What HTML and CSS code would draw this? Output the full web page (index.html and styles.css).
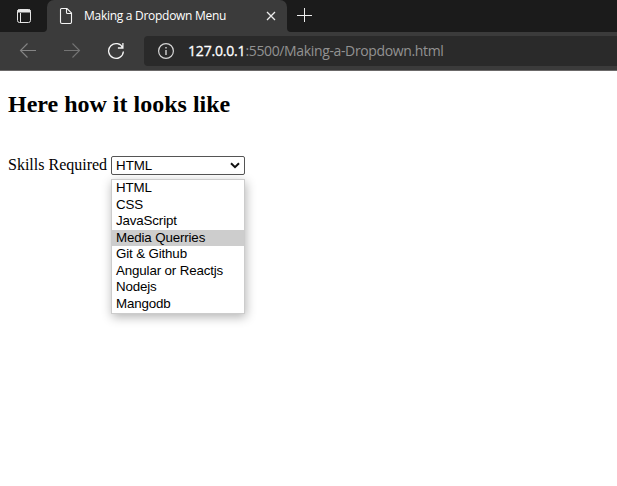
FILE: index.html
```html
<!DOCTYPE html>
<html lang="en">
<head>
<meta charset="utf-8">
<title>Making a Dropdown Menu</title>
<link rel="stylesheet" href="styles.css">
</head>
<body>
<header class="browser">
  <div class="tabs">
    <div class="tab-actions">
      <svg width="16" height="16" viewBox="0 0 16 16" fill="none" stroke="#e6e6e6"><rect x="1.5" y="1.5" width="13" height="13" rx="2"/><path d="M2 2h12v2H2z" fill="#e6e6e6"/><path d="M4.500 5v9"/></svg>
    </div>
    <div class="tab">
      <svg class="page-icon" width="14" height="18" viewBox="0 0 14 18" fill="none" stroke="#f4f4f4" stroke-width="1.1"><path d="M2.5 1.5H8l4.5 4.5v9a1.5 1.5 0 0 1-1.5 1.5H3A1.5 1.5 0 0 1 1.500 15V2.500a1 1 0 0 1 1-1ZM7.500 1.500v4a1 1 0 0 0 1 1h4"/></svg>
      <span class="title">Making a Dropdown Menu</span>
      <svg class="close" width="10" height="10" viewBox="0 0 10 10" stroke="#ececec" stroke-width="1.3"><path d="M1 1l8 8M9 1L1 9"/></svg>
    </div>
    <div class="new-tab">
      <svg width="16" height="16" viewBox="0 0 16 16" stroke="#eee"><path d="M0 8.500h15M7.500 1v14"/></svg>
    </div>
  </div>
  <div class="toolbar">
    <svg class="back" width="18" height="18" viewBox="0 0 18 18" fill="none" stroke="#858585" stroke-width="1.1"><path d="M17 8.500H1.500M8.500 1.500l-7 7 7 7"/></svg>
    <svg class="forward" width="18" height="18" viewBox="0 0 18 18" fill="none" stroke="#747474" stroke-width="1.1"><path d="M1 8.500h15.500M9.500 1.500l7 7-7 7"/></svg>
    <svg class="reload" width="18" height="18" viewBox="0 0 18 18" fill="none" stroke="#f4f4f4" stroke-width="1.3"><path d="M15.800 6A7.400 7.400 0 1 0 16.400 9.500M15.900 1v5h-5"/></svg>
    <div class="address">
      <svg width="18" height="18" viewBox="0 0 18 18" fill="none" stroke="#d5d5d5" stroke-width="1.2"><circle cx="9" cy="9" r="7.400"/><path d="M9 8v5M9 5v1.500" stroke-width="1.400"/></svg>
      <span class="url"><b>127.0.0.1</b>:5500/Making-a-Dropdown.html</span>
    </div>
  </div>
</header>
<main>
  <h2>Here how it looks like</h2>
  <div class="field">
    <span class="label">Skills Required</span>
    <div class="select">
      <span>HTML</span>
      <svg width="10" height="7" viewBox="0 0 10 7" fill="none" stroke="#111" stroke-width="2"><path d="M1 1.200l4 4 4-4"/></svg>
      <ul class="menu">
        <li>HTML</li>
        <li>CSS</li>
        <li>JavaScript</li>
        <li class="active">Media Querries</li>
        <li>Git &amp; Github</li>
        <li>Angular or Reactjs</li>
        <li>Nodejs</li>
        <li>Mangodb</li>
      </ul>
    </div>
  </div>
</main>
</body>
</html>
```
FILE: styles.css
```css
* { box-sizing: border-box; }
html { height: 100%; background: #fff; }
body { margin: 0; min-height: 100vh; color: #000; font-family: "Liberation Serif", serif; }
svg { display: block; flex: none; }
.browser { height: 71px; background: #3b3b3b; border-bottom: 1px solid #6b6969; font-family: "Open Sans", "Noto Sans", sans-serif; }
.tabs { display: flex; height: 32px; background: #3b3b3b; }
.tab-actions { width: 47px; padding: 8px 0 0 16px; background: #1b1b1b; border-bottom-right-radius: 4px; }
.tab { display: flex; align-items: center; width: 240px; padding-left: 12px; color: #fff; background: linear-gradient(#1b1b1b, #1b1b1b) top / 100% 8px no-repeat; position: relative; z-index: 0; }
.tab::before { content: ""; position: absolute; z-index: -1; inset: 0; background: #3b3b3b; border-radius: 7px 7px 0 0; }
.title { width: 142px; margin-left: 11px; font-size: 12px; line-height: 18px; letter-spacing: -0.28px; white-space: nowrap; }
.close { margin-left: 40px; }
.new-tab { flex: 1; padding: 7px 0 0 10px; background: #1b1b1b; border-bottom-left-radius: 4px; }
.toolbar { display: flex; align-items: center; height: 38px; }
.back { margin-left: 19px; }
.forward { margin-left: 26px; }
.reload { margin-left: 26px; }
.address { display: flex; align-items: center; flex: 1; height: 30px; margin-left: 19px; padding-left: 13px; background: #2a2a2a; border-radius: 4px 0 0 4px; }
.url { margin-left: 13px; color: #929292; font-size: 14px; line-height: 20px; letter-spacing: -0.36px; white-space: nowrap; }
.url b { color: #fff; font-weight: 400; letter-spacing: -0.18px; -webkit-text-stroke: .3px #fff; }
main { padding: 20px 8px 0; }
h2 { margin: 0; font-size: 24px; line-height: 27px; }
.field { display: flex; align-items: center; height: 19px; margin-top: 38px; font-size: 16px; }
.label { width: 103px; padding-bottom: 2px; white-space: nowrap; line-height: 18px; }
.select { position: relative; display: flex; align-items: center; justify-content: space-between; width: 134px; height: 19px; padding: 0 4px; border: 1px solid #555; border-radius: 2px; font: 13.333px/16px "Liberation Sans", sans-serif; }
.menu { position: absolute; z-index: 1; top: 22px; left: -1px; width: 134px; margin: 0; padding: 0 0 1px; list-style: none; background: #fff; border: 1px solid #ccc; box-shadow: 1px 3px 10px rgba(0, 0, 0, .3); letter-spacing: -0.14px; }
.menu li { height: 16.55px; padding-left: 4px; line-height: 16px; white-space: nowrap; }
.menu .active { background: #cdcdcd; }
```
